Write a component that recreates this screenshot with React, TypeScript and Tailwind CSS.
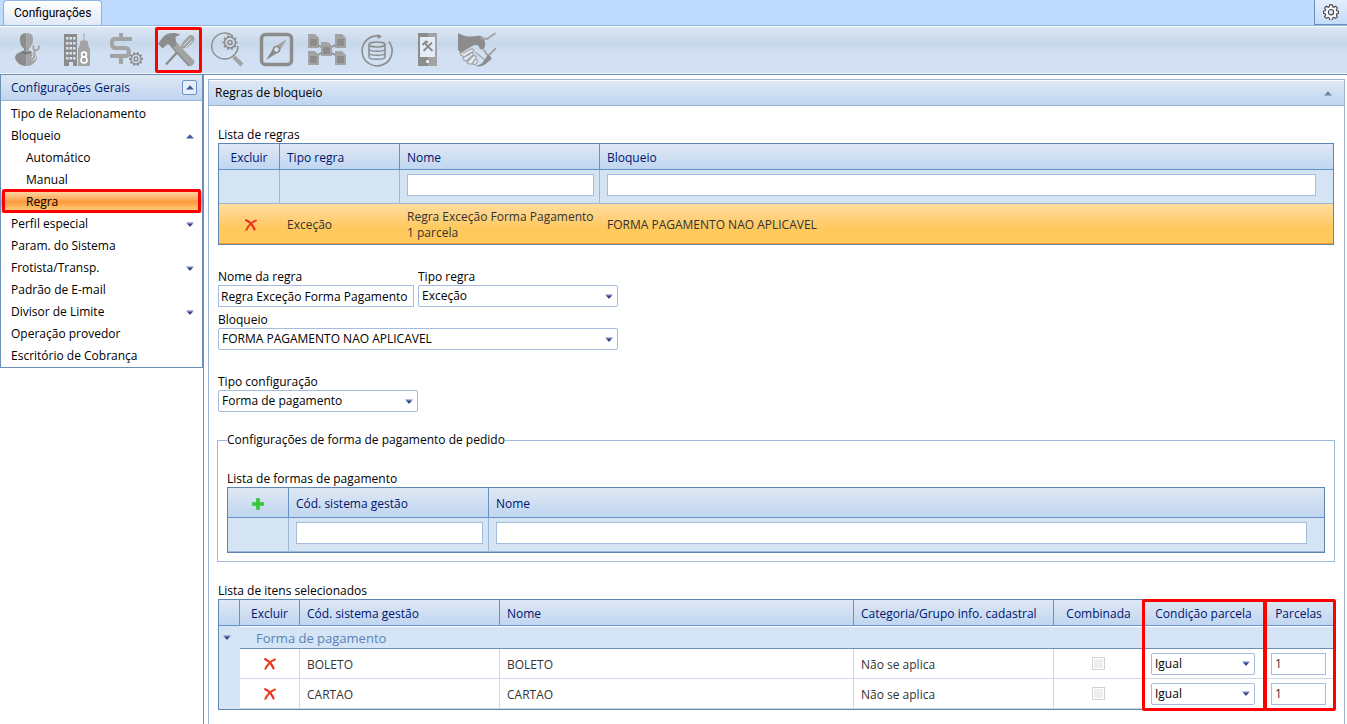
import { useId, type ReactNode } from "react";

const lineBlue = "border-[#6593c9]";
const headBg = "bg-linear-to-b from-[#dfe8f4] to-[#bfd5f0]";

function TriDown() {
  return (
    <svg viewBox="0 0 8 5" className="h-[5px] w-2" aria-hidden="true">
      <path d="M0 .5h8L4 4.8z" fill="#6b7cb8" />
      <path d="M1.500 2h5L4 4.8z" fill="#35437c" />
    </svg>
  );
}

function TriUp({ light = false }: { light?: boolean }) {
  return (
    <svg viewBox="0 0 8 5" className="h-[5px] w-2" aria-hidden="true">
      <path d="M0 4.5h8L4 .2z" fill={light ? "#6b83a3" : "#4a5a98"} />
    </svg>
  );
}

function RedX() {
  return (
    <svg viewBox="0 0 12 12" className="h-3 w-3" fill="none" aria-hidden="true">
      <path d="M1.2 1.2c3 1.2 6.5 5 8.3 9.2" stroke="#ee2a1c" strokeWidth="2.2" strokeLinecap="round" />
      <path d="M11 1.5C7 3 3.5 6.5 1.4 10.8" stroke="#e8401f" strokeWidth="2" strokeLinecap="round" />
    </svg>
  );
}

function Gear({ cx, cy, r, color, stroke = 1.5 }: { cx: number; cy: number; r: number; color: string; stroke?: number }) {
  const teeth = Array.from({ length: 10 }, (_, i) => (i * Math.PI) / 5);
  return (
    <g stroke={color} fill="none" strokeWidth={stroke}>
      <circle cx={cx} cy={cy} r={r} />
      {teeth.map((a) => (
        <line
          key={a}
          x1={cx + Math.cos(a) * r}
          y1={cy + Math.sin(a) * r}
          x2={cx + Math.cos(a) * (r + 2)}
          y2={cy + Math.sin(a) * (r + 2)}
          strokeWidth={stroke + 0.3}
        />
      ))}
      <circle cx={cx} cy={cy} r={r * 0.38} />
    </g>
  );
}

const D = "#8c8c8c";
const L = "#a3a3a3";

function Doc({ x, y }: { x: number; y: number }) {
  return (
    <g>
      <path d={`M${x} ${y}h7l4 4v10h-11z`} fill={L} />
      <path d={`M${x + 2} ${y + 5}h7v7h-7z`} fill={D} />
    </g>
  );
}

const tools: { label: string; box: string; art: ReactNode; marked?: boolean }[] = [
  {
    label: "Usuários",
    box: "8 32 40 38",
    art: (
      <>
        <path d="M26.500 34c-5 0-7 3-6.500 7 0 4 2 7.500 4 8.500v2l-6 2.500c-2 1-3 3-3 5 1.500 5 6 8 11.500 8z" fill={D} />
        <path d="M26.500 34c5 0 7 3 6.500 7 0 4-2 7.500-4 8.500v2l4.500 2c3 1.500 4 4 3.500 6-2 5-5.500 7.500-10.500 7.500z" fill={L} />
        <path d="M22 52.500q4.500 3.500 9 0" stroke="#6f6f6f" strokeWidth="1.5" fill="none" />
        <path d="M33.500 46.500c-.5 2.500 0 4 1 4.500v5q0 3-2.500 4M38.500 46.500c1 2 0 4-1.500 4.500h-2.500" stroke="#d5e2f2" strokeWidth="4" fill="none" />
        <path d="M33.500 46.500c-.5 2.500 0 4 1 4.500v5q0 3-2.500 4M38.500 46.500c1 2 0 4-1.500 4.500h-2.500" stroke={L} strokeWidth="2" fill="none" />
      </>
    ),
  },
  {
    label: "Empresas",
    box: "58 32 40 38",
    art: (
      <>
        <path d="M64 35h13v32H64z" fill={D} />
        {[38, 43, 48, 53, 58].map((y) => (
          <path key={y} d={`M66 ${y}h2.500v2.500h-2.500zM69.500 ${y}h2.500v2.500h-2.500zM73 ${y}h2.500v2.500h-2.500z`} fill="#d5e2f2" />
        ))}
        <path d="M69 63h4v4h-4z" fill="#d5e2f2" />
        <path d="M84 34v8M80 47l1-5h6l1 5 1.500 3v16.500H78.500V50z" fill={L} stroke={L} />
        <circle cx="84" cy="55.500" r="2.400" fill="none" stroke="#fff" strokeWidth="1.700" />
        <circle cx="84" cy="61" r="3" fill="none" stroke="#fff" strokeWidth="1.700" />
      </>
    ),
  },
  {
    label: "Financeiro",
    box: "108 32 40 38",
    art: (
      <>
        <path d="M121 34v5M121 57v8" stroke={L} strokeWidth="4" />
        <path d="M132 40h-17q-3 0-3 3v2q0 4 4 4h9q4 0 4 4t-4 4h-15" stroke={L} strokeWidth="4" fill="none" />
        <Gear cx={136} cy={60} r={5} color={D} stroke={1.5} />
      </>
    ),
  },
  {
    label: "Configurações gerais",
    box: "158 32 40 38",
    marked: true,
    art: (
      <>
        <path d="M166 65.500l11-12" stroke={D} strokeWidth="2.400" fill="none" />
        <path d="M181 49c-1.500-3 3-7 8-12.500 3.500-1.500 6 1.500 5.500 5-4 5-9 9.500-13.500 7.500z" fill={L} />
        <path d="M183.500 46.500l7-7M185.500 48.500l7-7" stroke="#d5e2f2" strokeWidth="1" />
        <path d="M158 44.500l6-7.500c4-3.500 11-4 16.500-1.500l-5 2.500.5 5 3 3-5.500 5-4.500-5.500h-2l-4.500 4z" fill={D} />
        <path d="M173 49l4.500-4.500L194.500 62c0 3-2.500 5.500-5.500 5z" fill={L} />
        <path d="M174 50.500L189 67" stroke={D} strokeWidth="1.500" />
      </>
    ),
  },
  {
    label: "Pesquisa",
    box: "208 32 40 38",
    art: (
      <>
        <path d="M233 37a13 13 0 1 0 2 18" stroke={D} strokeWidth="1.400" fill="none" />
        <path d="M238 47q0 5-3 8" stroke={D} strokeWidth="1.400" fill="none" />
        <path d="M234 58l8 8" stroke={L} strokeWidth="4" />
        <Gear cx={230} cy={43.5} r={5.5} color={D} stroke={1.5} />
      </>
    ),
  },
  {
    label: "Navegação",
    box: "258 32 40 38",
    art: (
      <>
        <rect x="261.5" y="35.5" width="30" height="30" rx="4" fill="none" stroke={D} strokeWidth="3.500" />
        <path d="M287 40l-8 13-5-5z" fill={L} />
        <path d="M266 61l8-13 5 5z" fill={D} />
        <circle cx="276.5" cy="50.5" r="3" fill="#d5e2f2" stroke={D} strokeWidth="1.5" />
      </>
    ),
  },
  {
    label: "Documentos",
    box: "308 32 40 38",
    art: (
      <>
        <path d="M316 45l21 12M316 57l21-12" stroke={D} strokeWidth="1.5" />
        <Doc x={308} y={35} />
        <Doc x={335} y={35} />
        <Doc x={321} y={43} />
        <Doc x={308} y={52} />
        <Doc x={335} y={52} />
      </>
    ),
  },
  {
    label: "Base de dados",
    box: "358 32 40 38",
    art: (
      <>
        <path d="M379 37a15 15 0 1 0 9 4.500" stroke={D} strokeWidth="1.600" fill="none" transform="rotate(5 377 51)" />
        <path d="M377 35l5 2.500-4 2.500z" fill={D} />
        <g fill="none" stroke={D} strokeWidth="1.5">
          <ellipse cx="377" cy="45.5" rx="8" ry="2.5" />
          <path d="M369 45.500v12.500c0 3 16 3 16 0V45.500M369 50c0 3 16 3 16 0M369 54c0 3 16 3 16 0" />
        </g>
      </>
    ),
  },
  {
    label: "Dispositivos",
    box: "408 32 40 38",
    art: (
      <>
        <path d="M418 34h10v33h-10z" fill={D} />
        <path d="M428 34h9v33h-9z" fill={L} />
        <path d="M420 38h15v20h-15z" fill="#e4ecf7" />
        <path d="M424.500 44l8 8M432 43.500l-8.500 8.500" stroke={D} strokeWidth="1.800" />
        <path d="M422.500 46l3.500-3.500 2 1" stroke={D} strokeWidth="2" fill="none" />
        <circle cx="427.5" cy="62.5" r="1.5" fill="#fff" />
      </>
    ),
  },
  {
    label: "Parcerias",
    box: "458 32 40 38",
    art: (
      <>
        <path d="M458 34c4 2 8 4 12 3.500 4 0 8-1.500 11-.5 2 1 3.500 3 4 6 .5 3 0 6-2 7.500l-3-.5c-1-2.500-2-4-4-4-3 0-5 2-8 3.500L461 54l-3-3z" fill={D} />
        <path d="M481 39l6 1 8-5.500" stroke={L} strokeWidth="1.800" fill="none" strokeLinecap="round" />
        <path d="M484 51l4 6 7.500-7.500" stroke={L} strokeWidth="1.800" fill="none" strokeLinecap="round" />
        <path
          d="M460 53.500l4 .5 6-3.500c2-1 4-.5 4 1l-6 5-4 1c-2 0-4-2-4-4zM463 59l7-5c2-1 4 0 3 2l-6 5.500c-2 1-4-1-4-2.500zM467 63l6-6c2-1 4 0 3 2l-4 5.500c-2 1-4 .5-5-1.500zM472 65l3-4c1-1.500 3 0 2.500 1.500l-2 3z"
          fill="#e2eaf5"
          stroke={L}
          strokeWidth="1.200"
        />
        <path d="M475 53l10 8" stroke={L} strokeWidth="1.300" />
        <path d="M476 66.500c3 0 6-1.500 8-5l3-4.500c2-1.500 4 0 4.500 2.500-1.500 3-4 3-5 5-2.500 1.500-5 3.500-9 3z" fill={D} />
      </>
    ),
  },
];

function Toolbar() {
  return (
    <nav
      aria-label="Ferramentas"
      className="flex h-12 shrink-0 items-stretch gap-1 border-y border-t-white border-b-[#f4f8fd] bg-linear-to-b from-[#dde7f4] from-0% via-[#c7d8ea] via-35% to-[#d2e0f3] to-60% pl-[5px]"
    >
      {tools.map((t) => (
        <button key={t.label} type="button" title={t.label} aria-label={t.label} className="relative flex w-[46px] items-center justify-center">
          <svg viewBox={t.box} className="h-[38px] w-10">
            {t.art}
          </svg>
          {t.marked && <span className="absolute inset-y-0 -right-px left-0 rounded-xs border-3 border-[#ff0000]" />}
        </button>
      ))}
    </nav>
  );
}

type Item = { text: string; sub?: boolean; arrow?: "up" | "down"; active?: boolean };
const menu: Item[] = [
  { text: "Tipo de Relacionamento" },
  { text: "Bloqueio", arrow: "up" },
  { text: "Automático", sub: true },
  { text: "Manual", sub: true },
  { text: "Regra", sub: true, active: true },
  { text: "Perfil especial", arrow: "down" },
  { text: "Param. do Sistema" },
  { text: "Frotista/Transp.", arrow: "down" },
  { text: "Padrão de E-mail" },
  { text: "Divisor de Limite", arrow: "down" },
  { text: "Operação provedor" },
  { text: "Escritório de Cobrança" },
];

function Sidebar() {
  return (
    <aside className="w-[203px] shrink-0">
      <div className="border-x border-b border-[#6b8fb5] bg-white">
        <div className={`flex h-[26px] items-center justify-between border-b border-[#9ab6d8] pr-[5px] pl-2.5 text-[#00156e] ${headBg}`}>
          <h2>Configurações Gerais</h2>
          <button type="button" aria-label="Recolher" className="flex h-[15px] w-[15px] items-center justify-center rounded-xs border border-[#6f93c9] bg-[#e6eefa]">
            <TriUp />
          </button>
        </div>
        <ul className="pt-0.5">
          {menu.map((m) => (
            <li key={m.text} className="relative">
              <a
                href="#"
                className={`flex h-[22px] items-center justify-between pr-2 ${m.sub ? "pl-[25px]" : "pl-2.5"} ${
                  m.active ? "bg-linear-to-b from-[#fdd9a5] via-[#fc9a3c] via-50% to-[#fedc86]" : ""
                }`}
              >
                {m.text}
                {m.arrow === "up" && <TriUp />}
                {m.arrow === "down" && <TriDown />}
              </a>
              {m.active && <span className="pointer-events-none absolute -top-0.5 right-px bottom-0 left-px rounded-xs border-3 border-[#ff0000]" />}
            </li>
          ))}
        </ul>
      </div>
    </aside>
  );
}

function Select({ value, label, name, className = "" }: { value: string; label?: string; name?: string; className?: string }) {
  const id = useId();
  return (
    <div className={className}>
      {label && (
        <label htmlFor={id} className="block h-[17px] leading-[17px]">
          {label}
        </label>
      )}
      <div className="relative">
        <select
          id={id}
          aria-label={name}
          defaultValue={value}
          className="block h-[22px] w-full appearance-none rounded-xs border border-[#a6bcdf] bg-white pr-5 pl-[3px] text-black"
        >
          <option>{value}</option>
        </select>
        <span className="pointer-events-none absolute inset-y-0 right-[5px] flex items-center">
          <TriDown />
        </span>
      </div>
    </div>
  );
}

function Th({ children, center = false, last = false }: { children?: ReactNode; center?: boolean; last?: boolean }) {
  return (
    <th
      scope="col"
      className={`border-b pt-0.5 font-normal text-[#00156e] ${lineBlue} ${last ? "" : "border-r"} ${center ? "px-0 text-center" : "px-[7px] text-left"}`}
    >
      {children}
    </th>
  );
}

function FilterCell({ label, last = false }: { label?: string; last?: boolean }) {
  return (
    <td className={`border-b border-[#9cb6d6] bg-[#d5e4f3] pb-[3px] pl-[7px] ${last ? "pr-[17px]" : "border-r pr-[5px]"}`}>
      {label && <input aria-label={label} className="block h-[22px] w-full border border-[#a6bcdf] bg-white px-1" />}
    </td>
  );
}

const tableCls = "w-full table-fixed border-separate border-spacing-0 border border-[#5f86b0]";

function DeleteButton() {
  return (
    <button type="button" aria-label="Excluir" className="flex w-full items-center justify-center">
      <RedX />
    </button>
  );
}

function RulesTable() {
  const cell = "border-b border-[#f59d2a] pt-0.5 pr-1 pl-[7px] leading-4";
  return (
    <table className={tableCls}>
      <colgroup>
        <col className="w-[61px]" />
        <col className="w-[120px]" />
        <col className="w-[200px]" />
        <col />
      </colgroup>
      <thead>
        <tr className={`h-[26px] ${headBg}`}>
          <Th center>Excluir</Th>
          <Th>Tipo regra</Th>
          <Th>Nome</Th>
          <Th last>Bloqueio</Th>
        </tr>
      </thead>
      <tbody>
        <tr className="h-[34px]">
          <FilterCell />
          <FilterCell />
          <FilterCell label="Filtrar nome" />
          <FilterCell label="Filtrar bloqueio" last />
        </tr>
        <tr className="h-10 bg-linear-to-b from-[#ffdb9e] to-[#ffc95d] to-60% text-[#333]">
          <td className={cell}>
            <DeleteButton />
          </td>
          <td className={cell}>Exceção</td>
          <td className={cell}>Regra Exceção Forma Pagamento 1 parcela</td>
          <td className={cell}>FORMA PAGAMENTO NAO APLICAVEL</td>
        </tr>
      </tbody>
    </table>
  );
}

function PaymentTable() {
  return (
    <table className={tableCls}>
      <colgroup>
        <col className="w-[61px]" />
        <col className="w-[200px]" />
        <col />
      </colgroup>
      <thead>
        <tr className={`h-[30px] ${headBg}`}>
          <Th center>
            <button type="button" aria-label="Adicionar" className="flex w-full justify-center">
              <svg viewBox="0 0 12 12" className="h-3 w-3">
                <path d="M4.500 .5h3v4h4v3h-4v4h-3v-4h-4v-3h4z" fill="#2ecc2e" stroke="#27b82a" strokeWidth=".5" />
              </svg>
            </button>
          </Th>
          <Th>Cód. sistema gestão</Th>
          <Th last>Nome</Th>
        </tr>
      </thead>
      <tbody>
        <tr className="h-[34px]">
          <FilterCell />
          <FilterCell label="Filtrar código" />
          <FilterCell label="Filtrar nome da forma" last />
        </tr>
      </tbody>
    </table>
  );
}

function ItemsTable() {
  const cell = "border-r border-b border-[#d0d7e5] px-[7px]";
  return (
    <div className="relative">
      <table className={tableCls}>
        <colgroup>
          <col className="w-[21px]" />
          <col className="w-[60px]" />
          <col className="w-[200px]" />
          <col />
          <col className="w-[200px]" />
          <col className="w-[90px]" />
          <col className="w-[120px]" />
          <col className="w-[69px]" />
        </colgroup>
        <thead>
          <tr className={`h-[26px] ${headBg}`}>
            <Th />
            <Th center>Excluir</Th>
            <Th>Cód. sistema gestão</Th>
            <Th>Nome</Th>
            <Th>Categoria/Grupo info. cadastral</Th>
            <Th center>Combinada</Th>
            <Th center>Condição parcela</Th>
            <Th center last>
              Parcelas
            </Th>
          </tr>
        </thead>
        <tbody>
          <tr className="h-[23px] bg-[#d5e5f5]">
            <td>
              <button type="button" aria-label="Recolher grupo" className="flex w-4 justify-center">
                <TriDown />
              </button>
            </td>
            <td colSpan={7} className="border-t border-b border-t-white border-b-[#6b8fb5] pl-4 text-[13px] text-[#5b82b8]">
              Forma de pagamento
            </td>
          </tr>
          {["BOLETO", "CARTAO"].map((name) => (
            <tr key={name} className="h-[30px] text-[#333]">
              <td className="bg-[#d5e5f5]" />
              <td className={cell}>
                <DeleteButton />
              </td>
              <td className={`${cell} pt-0.5`}>{name}</td>
              <td className={`${cell} pt-0.5`}>{name}</td>
              <td className={`${cell} pt-0.5`}>Não se aplica</td>
              <td className={cell}>
                <input
                  type="checkbox"
                  disabled
                  aria-label={`Combinada ${name}`}
                  className="mx-auto block h-[13px] w-[13px] appearance-none border border-[#d0d3d6] bg-[#eceeef] ring-1 ring-white ring-inset"
                />
              </td>
              <td className={cell}>
                <Select value="Igual" name={`Condição parcela ${name}`} className="w-[104px]" />
              </td>
              <td className="border-b border-[#d0d7e5] px-[7px]">
                <input aria-label={`Parcelas ${name}`} defaultValue="1" className="block h-[22px] w-full border border-[#a6bcdf] bg-white px-[3px]" />
              </td>
            </tr>
          ))}
        </tbody>
      </table>
      <span className="pointer-events-none absolute top-0 right-[68px] -bottom-px w-[124px] rounded-xs border-3 border-[#ff0000]" />
      <span className="pointer-events-none absolute top-0 -right-0.5 -bottom-px w-[72px] rounded-xs border-3 border-[#ff0000]" />
    </div>
  );
}

export default function App() {
  return (
    <div className="flex h-screen flex-col overflow-hidden bg-white font-['Open_Sans','Noto_Sans',sans-serif] text-[12px] leading-4 text-black">
      <header className="flex h-[26px] shrink-0 items-end justify-between border-b border-[#8db2e3] bg-[#bfdbff] pl-[3px]">
        <button type="button" className="h-[25px] rounded-t-sm border border-b-0 border-[#8db2e3] bg-linear-to-b from-white to-[#dfe9f6] px-2.5 font-[Roboto,sans-serif]">
          Configurações
        </button>
        <button type="button" aria-label="Opções" className="flex h-[26px] w-[33px] items-center justify-center border-y border-l border-[#6b8fb5] bg-linear-to-b from-[#e3eefd] to-[#c4dcfb]">
          <svg viewBox="0 0 18 18" className="h-4 w-4">
            <path
              d="M7.500 1h3l.5 2.200 1.200.5 2-1.200 2 2-1.200 2 .5 1.100 2 .4v2.500l-2 .5-.5 1.200 1.200 2-2 2-2-1.200-1.200.5-.5 2.500h-3L7 15.500l-1.200-.5-2 1.200-2-2 1.200-2-.5-1.200L.5 10.500V8l2-.4L3 6.500l-1.200-2 2-2 2 1.200L7 3.200z"
              fill="#fff"
              stroke="#444"
              strokeWidth="1.200"
            />
            <circle cx="9" cy="9.200" r="3" fill="#dbe8fb" stroke="#444" strokeWidth="1.200" />
          </svg>
        </button>
      </header>
      <Toolbar />
      <div className="flex min-h-0 flex-1 border-t border-[#6b8fb5]">
        <Sidebar />
        <main className="flex min-w-0 flex-1 flex-col border-l border-[#6b8fb5] pt-1 pr-0.5 pl-1">
          <section className="flex-1 border border-b-0 border-[#9ab4d2]">
            <div className={`flex h-[26px] items-center justify-between border-t border-b border-t-white border-b-[#9ab4d2] pr-3 pl-1.5 ${headBg}`}>
              <h1>Regras de bloqueio</h1>
              <button type="button" aria-label="Recolher painel">
                <TriUp light />
              </button>
            </div>
            <div className="pt-5 pr-2.5 pl-[9px]">
              <p className="h-[17px] leading-[17px]">Lista de regras</p>
              <RulesTable />
              <div className="mt-[23px] flex gap-1">
                <div className="w-[196px]">
                  <label htmlFor="rule-name" className="block h-[17px] leading-[17px]">
                    Nome da regra
                  </label>
                  <input
                    id="rule-name"
                    defaultValue="Regra Exceção Forma Pagamento 1 parcela"
                    className="block h-[22px] w-full border border-[#a6bcdf] bg-white px-0.5"
                  />
                </div>
                <Select label="Tipo regra" value="Exceção" className="w-[200px]" />
              </div>
              <Select label="Bloqueio" value="FORMA PAGAMENTO NAO APLICAVEL" className="mt-1 w-[400px]" />
              <Select label="Tipo configuração" value="Forma de pagamento" className="mt-[23px] w-[200px]" />
              <fieldset className="-mx-px mt-5 min-w-0 border border-[#9cbbdb] px-[9px] pb-2">
                <legend className="p-0">Configurações de forma de pagamento de pedido</legend>
                <p className="mt-[22px] h-[17px] leading-[17px]">Lista de formas de pagamento</p>
                <PaymentTable />
              </fieldset>
              <p className="mt-5 h-[17px] leading-[17px]">Lista de itens selecionados</p>
              <ItemsTable />
            </div>
          </section>
        </main>
      </div>
    </div>
  );
}
